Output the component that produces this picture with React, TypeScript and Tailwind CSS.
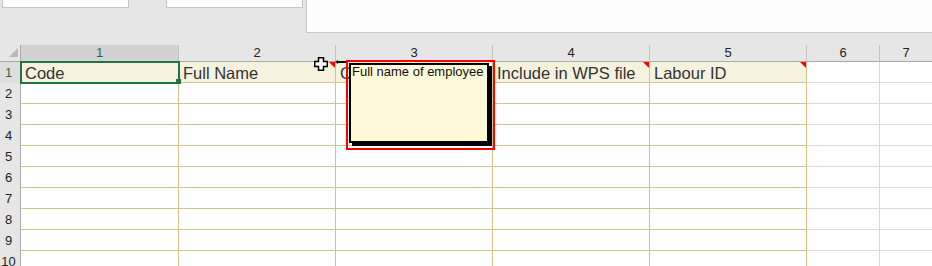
import React from 'react';

// sheet with a header row and a comment box open on column 3

const headers = ['Code', 'Full Name', 'C', 'Include in WPS file', 'Labour ID'];
const hasNote = [false, true, false, true, true];
const rows = [1, 2, 3, 4, 5, 6, 7, 8, 9, 10];
const colNums = [1, 2, 3, 4, 5, 6, 7];

function NoteMark() {
  return (
    <span className="absolute top-0 right-0 w-0 h-0 border-t-[6px] border-l-[6px] border-t-[#ff0000] border-l-transparent" />
  );
}

function Cell({ col, row }: { col: number; row: number }) {
  const tan = col < 5;
  const last = col === 6;
  let cls = 'relative h-[21px] border-b ';
  if (tan) cls += 'border-r border-[#d3c48c] ';
  else if (!last) cls += 'border-r border-[#dadada] ';
  else cls += 'border-[#dadada] ';
  if (row === 1 && tan) cls += 'bg-[#f5f2de]';
  else cls += 'bg-white';

  return (
    <div className={cls}>
      {row === 1 && tan && (
        <>
          <div className="flex h-full items-end pl-[4px] pb-px text-[16.5px] leading-none text-[#333] whitespace-nowrap overflow-hidden">
            {headers[col]}
          </div>
          {hasNote[col] && <NoteMark />}
        </>
      )}
    </div>
  );
}

export default function App() {
  return (
    <div className="relative w-[932px] h-[266px] overflow-hidden bg-white font-['Liberation_Sans',Arial,sans-serif]">
      {/* ribbon leftovers */}
      <div className="flex items-start h-[45px] bg-[#e6e6e6]">
        <div className="ml-[2px] w-[127px] h-[8px] bg-[#fdfdfd] border border-t-0 border-[#c6c6c6]" />
        <div className="ml-[37px] w-[137px] h-[8px] bg-[#fdfdfd] border border-t-0 border-[#c6c6c6]" />
        <div className="ml-[3px] flex-1 h-[33px] bg-[#fdfdfd] border-l border-b border-[#c6c6c6]" />
      </div>

      <div className="grid grid-cols-[21px_158px_157px_157px_157px_157px_73px_1fr]">
        {/* column headers */}
        <div className="relative h-[17px] bg-[#e6e6e6] border-r border-b border-[#ababab]">
          <svg className="absolute left-[9px] top-[3px]" width="9" height="9" viewBox="0 0 9 9">
            <polygon points="9,0 9,9 0,9" fill="#b9b9b9" />
          </svg>
        </div>
        {colNums.map((n) => (
          <div
            key={n}
            className={
              'h-[17px] border-b border-[#ababab] text-center text-[13px] leading-[16px] ' +
              (n === 1 ? 'bg-[#d2d2d2] text-[#1e6b41] ' : 'bg-[#e6e6e6] text-[#222] ') +
              (n < 7 ? 'border-r border-r-[#c3c3c3]' : '')
            }
          >
            {n}
          </div>
        ))}

        {rows.map((r) => (
          <React.Fragment key={r}>
            <div
              className={
                'h-[21px] border-r border-[#ababab] pr-[3px] text-center text-[13px] leading-[22px] ' +
                (r === 1 ? 'bg-[#dedede] text-[#1e6b41]' : 'bg-[#e6e6e6] text-[#222]')
              }
            >
              {r}
            </div>
            {[0, 1, 2, 3, 4, 5, 6].map((c) => (
              <Cell key={c} col={c} row={r} />
            ))}
          </React.Fragment>
        ))}
      </div>

      {/* active cell */}
      <div className="absolute left-[20px] top-[61px] w-[160px] h-[23px] border-2 border-[#217346]" />
      <div className="absolute left-[176px] top-[79px] w-[5px] h-[5px] bg-[#217346]" />

      {/* mouse cursor */}
      <svg className="absolute left-[314px] top-[57px]" width="14" height="14" viewBox="0 0 14 14">
        <polygon
          points="4.5,0.75 9.5,0.75 9.5,4.5 13.25,4.5 13.25,9.5 9.5,9.5 9.5,13.25 4.5,13.25 4.5,9.5 0.75,9.5 0.75,4.5 4.5,4.5"
          fill="#fff"
          stroke="#000"
          strokeWidth="1.5"
        />
      </svg>

      {/* comment arrow */}
      <svg className="absolute left-[335px] top-[60px]" width="11" height="4" viewBox="0 0 11 4">
        <polygon points="0,2 3,0 3,1 11,1 11,3 3,3 3,4" fill="#000" />
      </svg>

      {/* comment */}
      <div className="absolute left-[346px] top-[60px] w-[149px] h-[90px] border-2 border-[#ff0000] pl-px pt-px">
        <div className="w-[140px] h-[80px] bg-[#fff9d8] border-2 border-black shadow-[3px_3px_0_#000] pl-px text-[13px] leading-[13px] text-[#111]">
          Full name of employee
        </div>
      </div>
    </div>
  );
}
